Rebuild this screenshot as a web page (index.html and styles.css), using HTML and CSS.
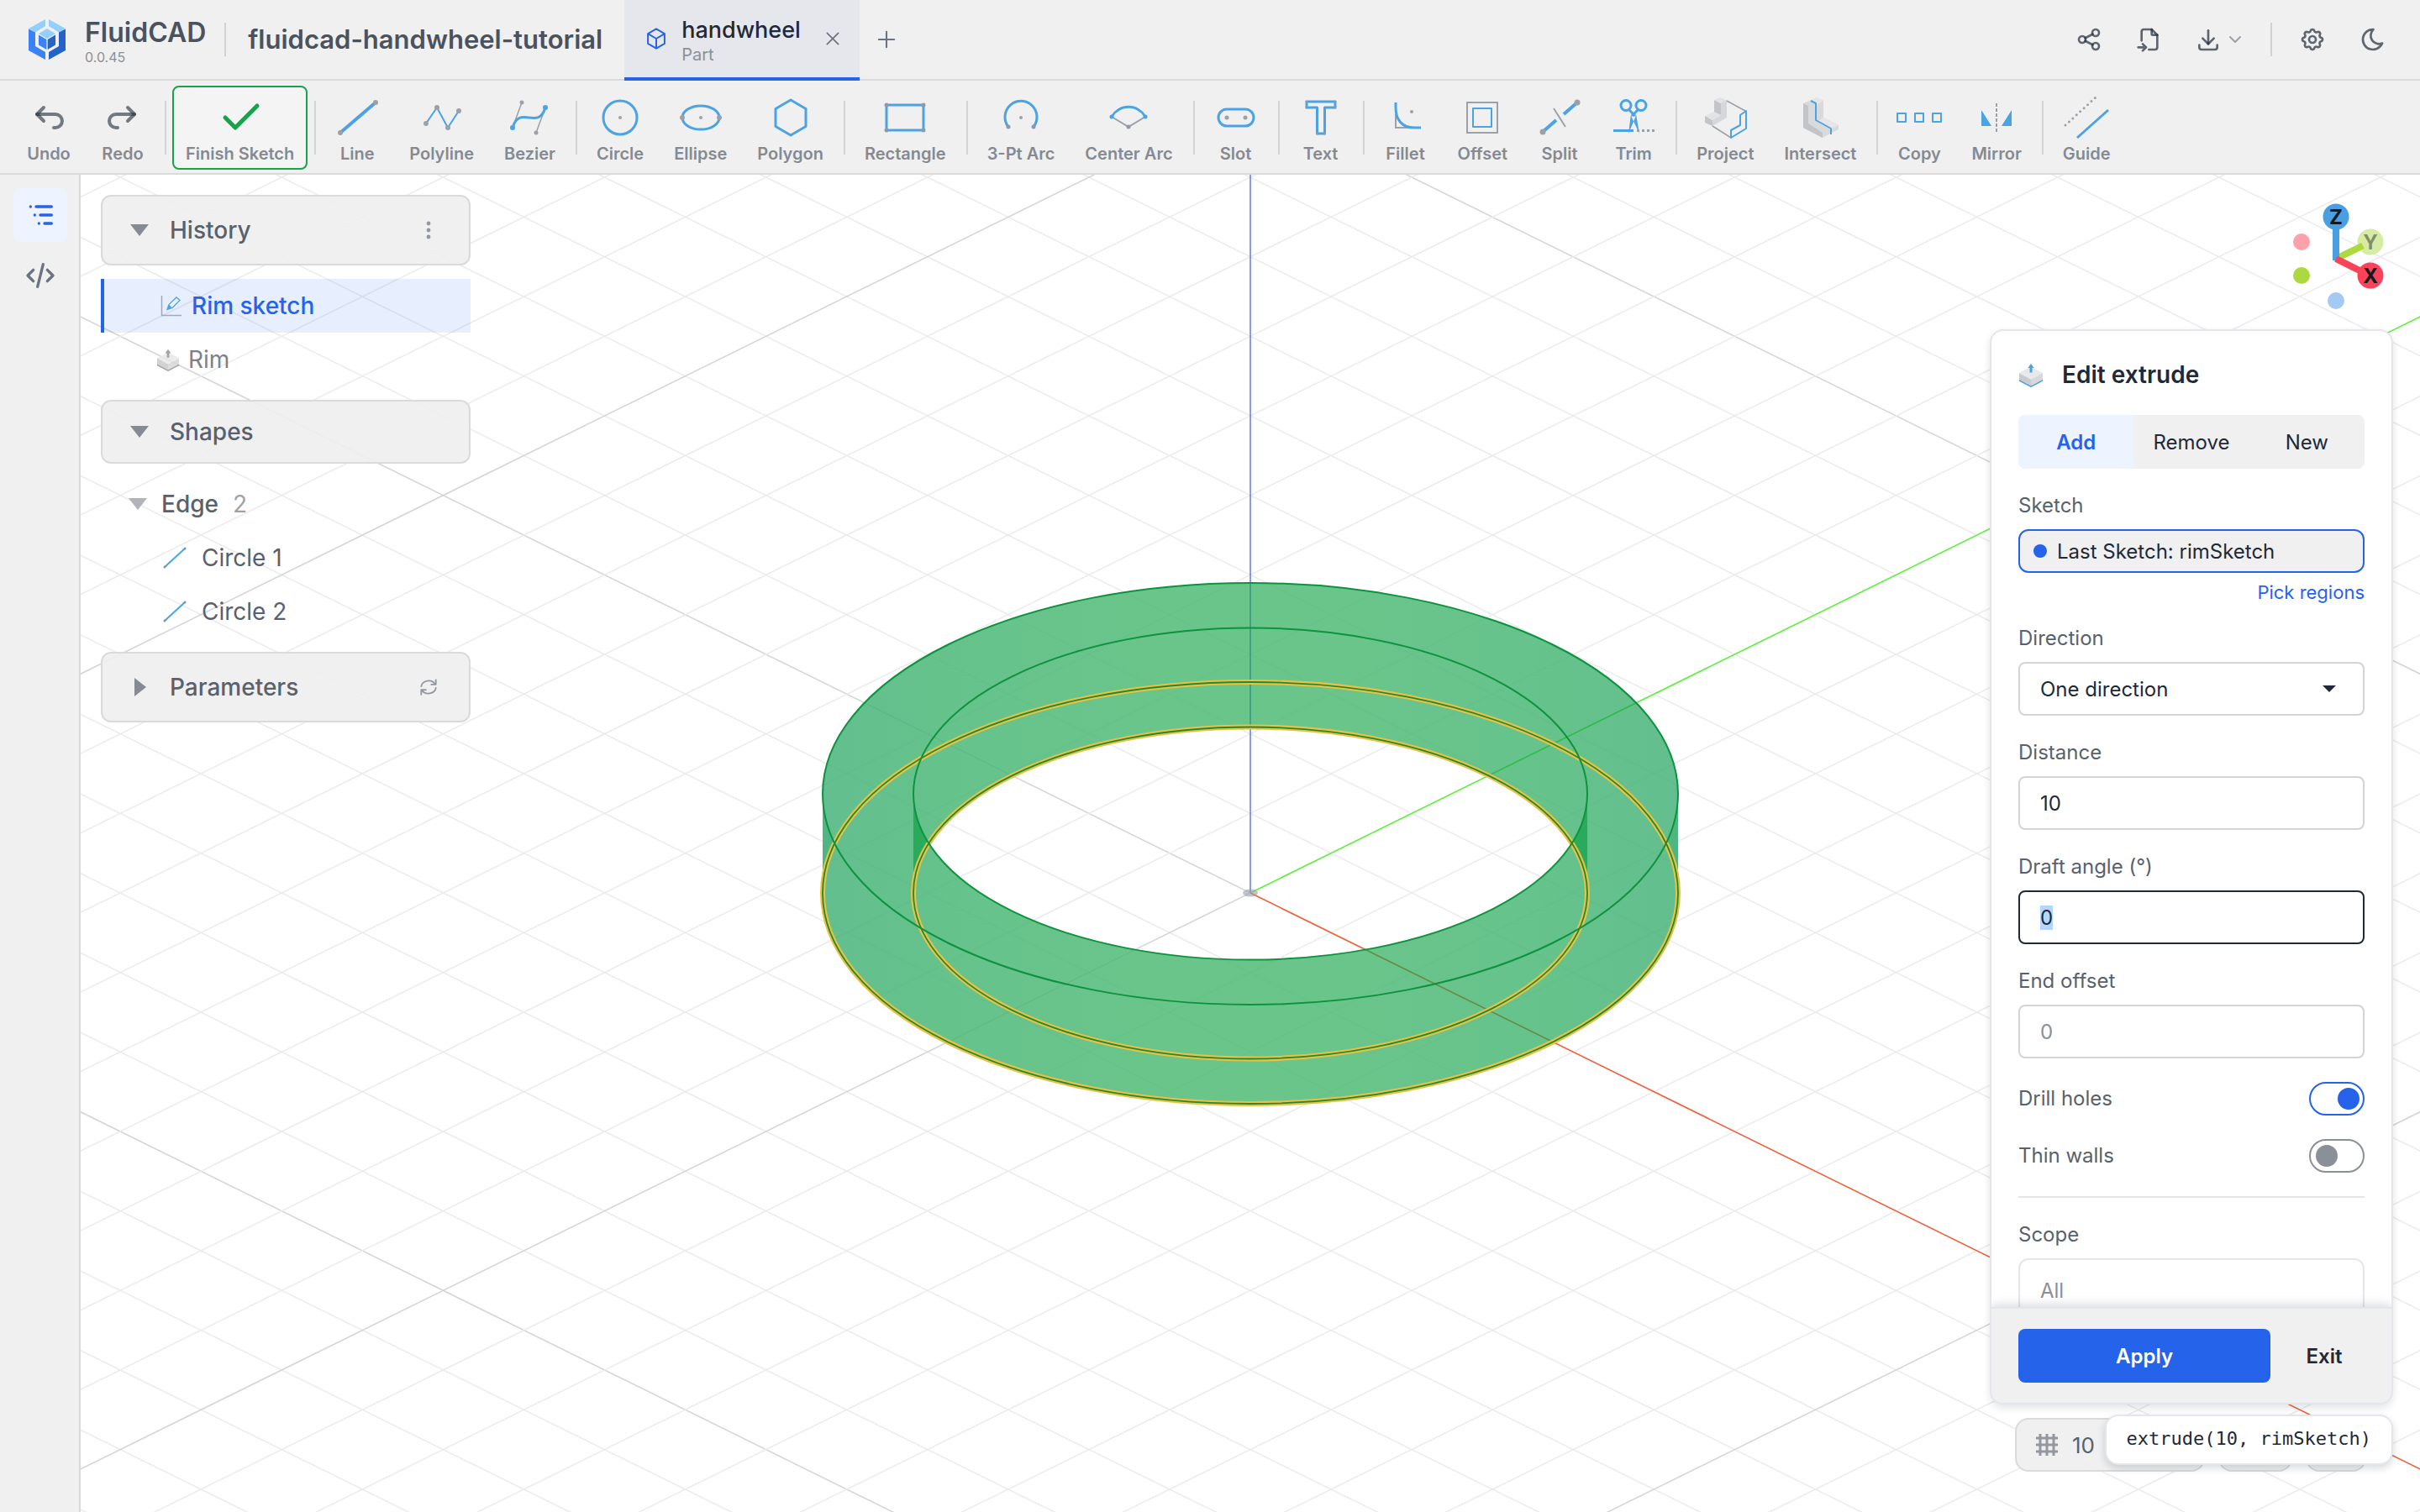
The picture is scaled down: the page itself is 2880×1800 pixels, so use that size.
FILE: index.html
```html
<!DOCTYPE html>
<html lang="en">
<head>
<meta charset="utf-8">
<meta name="viewport" content="width=device-width, initial-scale=1">
<title>FluidCAD – fluidcad-handwheel-tutorial</title>
<link rel="stylesheet" href="styles.css">
<script src="app.js" defer></script>
</head>
<body>
<svg class="defs" width="0" height="0" aria-hidden="true">
  <symbol id="extrude-icon" viewBox="0 0 30 30">
    <path class="ex-base" d="M1 21.500L15 29L29 21.500" />
    <path class="ex-left" d="M1 13L15 20.500V28.500L1 21Z" />
    <path class="ex-right" d="M15 20.500L29 13V21L15 28.500Z" />
    <path class="ex-top" d="M1 13L15 5.500L29 13L15 20.500Z" />
    <path class="ex-arrow" d="M13.500 12.500V7H11.300L15 2L18.700 7H16.500V12.500Z" />
  </symbol>
  <symbol id="edge-icon" viewBox="0 0 28 28">
    <path d="M2 25L26 3" stroke="#4ba3e3" stroke-width="2" />
    <circle cx="2" cy="25" r="1.500" fill="#8a919b" /><circle cx="26" cy="3" r="1.500" fill="#8a919b" />
  </symbol>
</svg>

<header class="topbar">
  <div class="brand">
    <svg class="logo" viewBox="-2 0 48 48" aria-hidden="true">
      <path fill="#93d0ff" d="M0 11L20 0V8L8 15.500ZM44 11L24 0V8L36 15.500ZM12 17L22 11L32 17L22 23Z" />
      <path fill="#3b82f6" d="M0 11.500L8 15.500V32L20 39V48L0 37Z" />
      <path fill="#2563c9" d="M44 11.500L36 15.500V32L24 39V48L44 37Z" />
      <path fill="#3b82f6" d="M12 18.500L21.300 24V36L12 30.500Z" />
      <path fill="#2563c9" d="M32 18.500L22.700 24V36L32 30.500Z" />
    </svg>
    <div class="brand-text">
      <span class="brand-name">FluidCAD</span>
      <span class="brand-version">0.0.45</span>
    </div>
  </div>
  <span class="bar-divider"></span>
  <h1 class="project-name">fluidcad-handwheel-tutorial</h1>
  <div class="tab">
    <svg class="tab-cube" viewBox="0 0 24 24" aria-hidden="true"><path d="M12 2l8.500 5v10L12 22l-8.500-5V7zM3.500 7L12 12l8.500-5M12 12v10" /></svg>
    <div class="tab-text"><span class="tab-name">handwheel</span><span class="tab-kind">Part</span></div>
    <button class="plain tab-close" aria-label="Close tab"><svg viewBox="0 0 24 24"><path d="M2 2L22 22M22 2L2 22" /></svg></button>
  </div>
  <button class="plain tab-add" aria-label="New tab"><svg viewBox="0 0 24 24"><path d="M12 1V23M1 12H23" /></svg></button>

  <div class="top-actions">
    <button class="icon-button" aria-label="Share"><svg viewBox="0 0 24 24"><circle cx="6" cy="12" r="3" /><circle cx="18" cy="6" r="3" /><circle cx="18" cy="18" r="3" /><path d="M8.700 10.700l6.600-3.400M8.700 13.300l6.600 3.400" /></svg></button>
    <button class="icon-button" aria-label="Import file"><svg viewBox="0 0 24 24"><path d="M14 3v4a1 1 0 0 0 1 1h4" /><path d="M5 13v-8a2 2 0 0 1 2-2h7l5 5v11a2 2 0 0 1-2 2h-5.500m-9.500-2h7m-3-3l3 3l-3 3" /></svg></button>
    <button class="icon-button export" aria-label="Export"><svg viewBox="0 0 24 24"><path d="M4 17v2a2 2 0 0 0 2 2h12a2 2 0 0 0 2-2v-2" /><path d="M7 11l5 5l5-5" /><path d="M12 4v12" /></svg><svg class="caret" viewBox="0 0 24 24"><path d="M6 9l6 6l6-6" /></svg></button>
    <span class="bar-divider action-divider"></span>
    <button class="icon-button" aria-label="Settings"><svg viewBox="0 0 24 24"><path d="M10.325 4.317c.426-1.756 2.924-1.756 3.350 0a1.724 1.724 0 0 0 2.573 1.066c1.543-.940 3.310.826 2.370 2.370a1.724 1.724 0 0 0 1.065 2.572c1.756.426 1.756 2.924 0 3.350a1.724 1.724 0 0 0-1.066 2.573c.940 1.543-.826 3.310-2.370 2.370a1.724 1.724 0 0 0-2.572 1.065c-.426 1.756-2.924 1.756-3.350 0a1.724 1.724 0 0 0-2.573-1.066c-1.543.940-3.310-.826-2.370-2.370a1.724 1.724 0 0 0-1.065-2.572c-1.756-.426-1.756-2.924 0-3.350a1.724 1.724 0 0 0 1.066-2.573c-.940-1.543.826-3.310 2.370-2.370c1 .608 2.296.070 2.572-1.065z" /><circle cx="12" cy="12" r="3" /></svg></button>
    <button class="icon-button" aria-label="Dark mode"><svg viewBox="0 0 24 24"><path d="M12 3c.132 0 .263 0 .393 0a7.500 7.500 0 0 0 7.920 12.446a9 9 0 1 1-8.313-12.454z" /></svg></button>
  </div>
</header>

<nav class="toolbar" aria-label="Sketch tools">
  <button class="tool"><svg class="dim" viewBox="0 0 24 24"><path d="M9 14l-4-4l4-4" /><path d="M5 10h11a4 4 0 1 1 0 8h-1" /></svg><span>Undo</span></button>
  <button class="tool"><svg class="dim" viewBox="0 0 24 24"><path d="M15 14l4-4l-4-4" /><path d="M19 10h-11a4 4 0 1 0 0 8h1" /></svg><span>Redo</span></button>
  <span class="tool-divider"></span>
  <button class="tool finish"><svg viewBox="0 0 48 48"><path d="M6 24L18 36L44 10" /></svg><span>Finish Sketch</span></button>
  <span class="tool-divider"></span>
  <button class="tool"><svg viewBox="0 0 48 48"><path class="b w4" d="M4 42L46 6" /><circle class="gd" cx="4" cy="42" r="3" /><circle class="gd" cx="46" cy="6" r="3" /></svg><span>Line</span></button>
  <button class="tool"><svg viewBox="0 0 48 48"><path class="b w2" d="M5 31L18 12L31 36L44 16" /><circle class="gd" cx="5" cy="31" r="3" /><circle class="gd" cx="18" cy="12" r="3" /><circle class="gd" cx="31" cy="36" r="3" /><circle class="gd" cx="44" cy="16" r="3" /></svg><span>Polyline</span></button>
  <button class="tool"><svg viewBox="0 0 48 48"><path class="g w1" d="M4 36L15 6M32 42L43 12" /><path class="b w3" d="M4 36C12 8 35 40 43 12" /><circle class="bd" cx="4" cy="36" r="3" /><circle class="bd" cx="43" cy="12" r="3" /><circle class="gd" cx="15" cy="6" r="2.500" /><circle class="gd" cx="32" cy="42" r="2.500" /></svg><span>Bezier</span></button>
  <span class="tool-divider"></span>
  <button class="tool"><svg viewBox="0 0 48 48"><circle class="b w3" cx="24" cy="24" r="20" /><circle class="gd" cx="24" cy="24" r="2" /></svg><span>Circle</span></button>
  <button class="tool"><svg viewBox="0 0 48 48"><ellipse class="b w3" cx="24" cy="24" rx="22" ry="14" /><circle class="gd" cx="2" cy="24" r="3" /><circle class="gd" cx="24" cy="24" r="2" /><circle class="gd" cx="46" cy="24" r="3" /></svg><span>Ellipse</span></button>
  <button class="tool"><svg viewBox="0 0 48 48"><path class="b w3" d="M24 3L42 13.500V34.500L24 45L6 34.500V13.500Z" /></svg><span>Polygon</span></button>
  <span class="tool-divider"></span>
  <button class="tool"><svg viewBox="0 0 48 48"><path class="b w3" d="M2 9H46V39H2Z" /><path class="gp" d="M2 9h.010M46 9h.010M2 39h.010M46 39h.010" /></svg><span>Rectangle</span></button>
  <span class="tool-divider"></span>
  <button class="tool"><svg viewBox="0 0 48 48"><path class="b w3" d="M9 35A19 19 0 1 1 39 35" /><path class="gp" d="M9 35h.010M39 35h.010" /><circle class="gd" cx="24" cy="24" r="2" /></svg><span>3-Pt Arc</span></button>
  <button class="tool"><svg viewBox="0 0 48 48"><path class="g w2" d="M4 23L24 35L44 23" /><path class="b w3" d="M4 23A23 23 0 0 1 44 23" /><path class="gp" d="M24 35h.010" /><circle class="bd" cx="4" cy="23" r="2.500" /><circle class="bd" cx="44" cy="23" r="2.500" /></svg><span>Center Arc</span></button>
  <span class="tool-divider"></span>
  <button class="tool"><svg viewBox="0 0 48 48"><rect class="b w3" x="3" y="14" width="42" height="20" rx="10" /><circle class="gd" cx="13" cy="24" r="2.500" /><circle class="gd" cx="35" cy="24" r="2.500" /></svg><span>Slot</span></button>
  <span class="tool-divider"></span>
  <button class="tool"><svg viewBox="0 0 48 48"><path class="b w3" d="M7 5H41V12H28.500V43H19.500V12H7Z" /><path class="gp small" d="M7 5h.010M41 5h.010M7 12h.010M41 12h.010M19.500 43h.010M28.500 43h.010" /></svg><span>Text</span></button>
  <span class="tool-divider"></span>
  <button class="tool"><svg viewBox="0 0 48 48"><path class="g w2" d="M12 20V36H28" /><path class="b w3" d="M12 6V12C12 27 20 36 34 36H42" /><circle class="gd" cx="31" cy="17" r="2" /></svg><span>Fillet</span></button>
  <button class="tool"><svg viewBox="0 0 48 48"><rect class="g w2" x="6" y="6" width="36" height="36" /><rect class="b w2" x="13" y="13" width="22" height="22" /></svg><span>Offset</span></button>
  <button class="tool"><svg viewBox="0 0 48 48"><path class="b w4" d="M4 41L20 27M29 20L45 6" /><path class="g w2" d="M17 13L31 35" /><circle class="gd" cx="4" cy="41" r="3.500" /><circle class="gd" cx="45" cy="6" r="3.500" /></svg><span>Split</span></button>
  <button class="tool"><svg viewBox="0 0 48 48"><circle class="b w3" cx="15" cy="9.500" r="6" /><circle class="b w3" cx="33" cy="9.500" r="6" /><path class="b w3" d="M19 15L26 22M29 15L22 22" /><path class="bf" d="M21 20L27 20L31 43L22 24ZM27 20L21 20L18 43L26 24Z" /><path class="b w3" d="M0 39.500H24" /><path class="g w3 dash" d="M28 39.500H49" /></svg><span>Trim</span></button>
  <span class="tool-divider"></span>
  <button class="tool"><svg viewBox="0 0 48 48"><path fill="#d6d7da" d="M19 6L26 3V24L9 34V27L19 21Z" /><path fill="#c3c4c8" d="M11 3L19 7V21L11 18ZM0 22L9 27V34L0 30Z" /><path fill="#e2e3e5" d="M11 3L18 0L26 3L19 7ZM0 22L11 17L19 21L9 27Z" /><path class="g w1" d="M26 4L48 16M9 34L31 48" /><path class="b w2" d="M49 16V37L31 48V39L42 33V21Z" /></svg><span>Project</span></button>
  <button class="tool"><svg viewBox="0 0 48 48"><path fill="#d9dadc" d="M4 7L20 0L28 4V24L46 33V38L27 48L4 36Z" /><path fill="#c3c4c8" d="M4 7L10 10V31L27 42V48L4 36Z" /><path fill="#e6e6e8" d="M20 0L28 4L20 8L13 4ZM28 24L46 33L36 38L20 29Z" /><path class="b w2" d="M13 4L19 7V27L37 37V44" /></svg><span>Intersect</span></button>
  <span class="tool-divider"></span>
  <button class="tool"><svg viewBox="0 0 48 48"><path class="b w2" d="M-2 19H8V29H-2ZM19 19H29V29H19ZM40 19H50V29H40Z" /></svg><span>Copy</span></button>
  <button class="tool"><svg viewBox="0 0 48 48"><path class="bf" d="M6 15V34H18ZM42 15V34H30Z" /><path class="g w2 dash2" d="M24 7V42" /></svg><span>Mirror</span></button>
  <span class="tool-divider"></span>
  <button class="tool"><svg viewBox="0 0 48 48"><path class="g w3 dots" d="M-1 33L36 -1" /><path class="b w3" d="M13 48L50 15" /></svg><span>Guide</span></button>
</nav>

<main class="workspace">
  <aside class="rail">
    <button class="rail-button active" aria-label="Model tree"><svg viewBox="0 0 24 24"><path d="M9 6h11M12 12h8M15 18h5M5 6v.010M8 12v.010M11 18v.010" /></svg></button>
    <button class="rail-button" aria-label="Code"><svg viewBox="0 0 24 24"><path d="M7 8l-4 4l4 4M17 8l4 4l-4 4M14 4l-4 16" /></svg></button>
  </aside>

  <section class="viewport" aria-label="3D view">
    <svg class="scene" viewBox="-1392 -855 2784 1592" preserveAspectRatio="xMidYMid slice" aria-hidden="true">
      <defs>
        <path id="gl" d="M-2000 -985.400L2000 985.400" />
        <path id="ring" fill-rule="evenodd" d="M-509 0V-118A509 251 0 0 1 509 -118V0A509 251 0 0 1 -509 0ZM-383 -59A401 197.500 0 0 1 383 -59A401 197.500 0 0 1 -383 -59Z" />
        <g id="minor">
          <use href="#gl" y="94.660" /><use href="#gl" y="189.320" /><use href="#gl" y="283.980" />
          <use href="#gl" y="378.640" /><use href="#gl" y="473.300" /><use href="#gl" y="567.960" />
          <use href="#gl" y="662.620" /><use href="#gl" y="757.280" /><use href="#gl" y="851.940" />
        </g>
        <g id="family">
          <g stroke="#ececee">
            <use href="#minor" y="-1893.200" /><use href="#minor" y="-946.600" /><use href="#minor" /><use href="#minor" y="946.600" />
          </g>
          <g stroke="#d6d6d9">
            <use href="#gl" y="-946.600" /><use href="#gl" /><use href="#gl" y="946.600" />
          </g>
        </g>
        <linearGradient id="body" gradientUnits="userSpaceOnUse" x1="-509" x2="509" y1="0" y2="0">
          <stop offset="0" stop-color="#0f9c53" /><stop offset=".15" stop-color="#13a24d" />
          <stop offset=".4" stop-color="#1aa64c" /><stop offset=".6" stop-color="#1aa64c" />
          <stop offset=".85" stop-color="#13a24d" /><stop offset="1" stop-color="#0f9c53" />
        </linearGradient>
      </defs>
      <g fill="none" stroke-width="1.600">
        <use href="#family" />
        <use href="#family" transform="scale(-1 1)" />
      </g>
      <use href="#ring" fill="#fff" fill-opacity=".5" />
      <g fill="none" stroke-width="1.600">
        <path stroke="#fff" stroke-width="3" d="M0 0L2000 985.400M0 0L2000 -985.400" />
        <path stroke="#6a82f6" d="M0 0V-900" />
        <path stroke="#5cf03c" d="M0 0L2000 -985.400" />
        <path stroke="#f0603c" d="M0 0L2000 985.400" />
      </g>
      <ellipse rx="9" ry="4.500" fill="#9aa0aa" fill-opacity=".6" />
      <use href="#ring" fill="url(#body)" fill-opacity=".65" />
      <path fill="#2aab5c" d="M-401 -118V0A401 197.500 0 0 1 -383 -59A401 197.500 0 0 1 -401 -118ZM401 -118V0A401 197.500 0 0 0 383 -59A401 197.500 0 0 0 401 -118Z" />
      <path fill="#4fb683" d="M-509 -118V0A509 251 0 0 1 -495 -59A509 251 0 0 1 -509 -118ZM509 -118V0A509 251 0 0 0 495 -59A509 251 0 0 0 509 -118Z" />
      <g fill="none">
        <g stroke="#edc044" stroke-width="6"><ellipse rx="509" ry="251" /><ellipse rx="401" ry="197.500" /></g>
        <g stroke="#1f8b31" stroke-width="1.800"><ellipse rx="509" ry="251" /><ellipse rx="401" ry="197.500" /></g>
        <g stroke="#0c933f" stroke-width="2"><ellipse cy="-118" rx="509" ry="251" /><ellipse cy="-118" rx="401" ry="197.500" /></g>
      </g>
    </svg>

    <div class="tree">
      <div class="tree-head">
        <svg class="twist" viewBox="0 0 22 22"><path d="M0 4H22L11 18Z" /></svg>
        <h2>History</h2>
        <button class="plain head-action" aria-label="History menu"><svg class="kebab" viewBox="0 0 24 24"><circle cx="12" cy="4" r="2.400" /><circle cx="12" cy="12" r="2.400" /><circle cx="12" cy="20" r="2.400" /></svg></button>
      </div>
      <ul class="tree-list">
        <li class="row history selected"><svg class="row-icon" viewBox="0 0 28 28"><path d="M2.500 2V25.500H26" fill="none" stroke="#a3a9b6" stroke-width="1.500" /><path d="M9 18.500L11 12.500L20 4L24 7.500L15 16.500Z" fill="#eaf2fd" stroke="#4ba3e3" stroke-width="1.300" /><path d="M9 18.500L11 12.500L15 16.500Z" fill="#4ba3e3" /></svg><span>Rim sketch</span></li>
        <li class="row history faded"><svg class="row-icon muted"><use href="#extrude-icon" /></svg><span>Rim</span></li>
      </ul>
      <div class="tree-head short">
        <svg class="twist" viewBox="0 0 22 22"><path d="M0 4H22L11 18Z" /></svg>
        <h2>Shapes</h2>
      </div>
      <ul class="tree-list">
        <li class="row group"><svg class="twist light" viewBox="0 0 22 22"><path d="M0 4H22L11 18Z" /></svg><span>Edge</span><span class="count">2</span></li>
        <li class="row shape"><svg class="row-icon"><use href="#edge-icon" /></svg><span>Circle 1</span></li>
        <li class="row shape"><svg class="row-icon"><use href="#edge-icon" /></svg><span>Circle 2</span></li>
      </ul>
      <div class="tree-head">
        <svg class="twist" viewBox="0 0 22 22"><path d="M5 0L19 11L5 22Z" /></svg>
        <h2>Parameters</h2>
        <button class="plain head-action" aria-label="Refresh parameters"><svg class="refresh" viewBox="0 0 24 24"><path d="M2.500 11A9.700 8.500 0 0 1 20.500 8M21.500 2.500V8.500H15.500M21.500 13A9.700 8.500 0 0 1 3.500 16M2.500 21.500V15.500H8.500" /></svg></button>
      </div>
    </div>

    <svg class="gizmo" viewBox="0 0 120 136" aria-label="View orientation">
      <circle cx="41" cy="48" r="10" fill="#fca0aa" /><circle cx="41" cy="88" r="10" fill="#acd93f" /><circle cx="82" cy="118" r="10" fill="#a4c9f2" />
      <circle cx="123" cy="48" r="15.500" fill="#d7eba4" />
      <path d="M82 68L114 52.500" stroke="#acd93f" stroke-width="8" />
      <path d="M82 70V20" stroke="#4a9fe3" stroke-width="8" />
      <path d="M82 68L118 86" stroke="#fa4258" stroke-width="8" />
      <circle cx="82" cy="18" r="15.500" fill="#4a9fe3" /><circle cx="123" cy="88" r="15.500" fill="#fa4258" />
      <text x="82" y="27">Z</text><text x="123" y="57" fill-opacity=".45">Y</text><text x="123" y="97">X</text>
    </svg>

    <div class="status">
      <button class="status-item grid-size"><svg viewBox="0 0 28 28"><path d="M6 1V27M14 1V27M22 1V27M1 6H27M1 14H27M1 22H27" /></svg>10</button>
      <button class="status-item mid" aria-label="View mode"></button>
      <button class="status-item end" aria-label="Fit view"></button>
    </div>

    <form class="panel" onsubmit="return false">
      <div class="panel-body">
        <div class="panel-title"><svg class="title-icon"><use href="#extrude-icon" /></svg><h2>Edit extrude</h2></div>
        <div class="segments">
          <button type="button" class="on">Add</button><button type="button">Remove</button><button type="button">New</button>
        </div>
        <div class="field">
          <span class="label">Sketch</span>
          <button type="button" class="picker"><span class="dot"></span>Last Sketch: rimSketch</button>
          <a class="pick" href="#regions">Pick regions</a>
        </div>
        <div class="field">
          <label for="direction">Direction</label>
          <div class="select-wrap">
            <select id="direction"><option>One direction</option></select>
            <svg viewBox="0 0 16 8"><path d="M0 0H16L8 8Z" /></svg>
          </div>
        </div>
        <div class="field"><label for="distance">Distance</label><input id="distance" type="text" value="10"></div>
        <div class="field"><label for="draft">Draft angle (°)</label><input id="draft" type="text" value="0" autofocus></div>
        <div class="field"><label for="offset">End offset</label><input id="offset" type="text" placeholder="0"></div>
        <div class="switch-row"><label for="drill">Drill holes</label><input id="drill" class="switch" type="checkbox" checked></div>
        <div class="switch-row"><label for="thin">Thin walls</label><input id="thin" class="switch" type="checkbox"></div>
        <hr>
        <div class="field"><label for="scope">Scope</label><input id="scope" class="scope" type="text" placeholder="All"></div>
      </div>
      <footer class="panel-foot">
        <button type="submit" class="apply">Apply</button>
        <button type="button" class="exit">Exit</button>
      </footer>
    </form>
    <code class="preview">extrude(10, rimSketch)</code>
  </section>
</main>
</body>
</html>
```
FILE: styles.css
```css
* { box-sizing: border-box; }

:root {
  --chrome: #f0f0f0;
  --line: #dadadb;
  --blue: #2563eb;
  --ink: #1f2937;
  --ink-2: #59616d;
  --ink-3: #8b9098;
  --tool: #4ba3e3;
}

body {
  margin: 0;
  height: 100vh;
  display: flex;
  flex-direction: column;
  overflow: hidden;
  background: #fff;
  color: var(--ink);
  font-family: Inter, "Liberation Sans", sans-serif;
  font-size: 28px;
}

button, input, select { font: inherit; color: inherit; }
button { cursor: pointer; }
h1, h2, ul { margin: 0; padding: 0; }
svg { display: block; flex: none; overflow: visible; }
.defs { position: absolute; }
.plain { border: 0; padding: 0; background: none; display: grid; place-items: center; }

/* Top bar */
.topbar {
  flex: none;
  display: flex;
  align-items: center;
  height: 96px;
  padding-left: 32px;
  padding-right: 24px;
  background: var(--chrome);
  border-bottom: 2px solid var(--line);
}
.brand { display: flex; align-items: center; gap: 21px; }
.logo { width: 48px; height: 48px; }
.brand-text { display: flex; flex-direction: column; padding-top: 4px; }
.brand-name { font-size: 32px; line-height: 38px; font-weight: 600; color: #4a5260; }
.brand-version { font-size: 16px; line-height: 20px; color: var(--ink-3); }
.bar-divider { width: 2px; height: 40px; background: #d0d1d4; }
.brand + .bar-divider { margin: 0 26px 0 22px; }
.project-name { font-size: 31px; line-height: 40px; font-weight: 600; color: #4a5260; }
.tab {
  display: flex;
  align-items: center;
  align-self: stretch;
  margin: 0 22px 0 26px;
  margin-bottom: -2px;
  padding: 0 24px;
  background: #e5e7ec;
  border-bottom: 4px solid var(--blue);
}
.tab-cube { width: 28px; height: 28px; fill: none; stroke: var(--blue); stroke-width: 1.700; stroke-linejoin: round; }
.tab-text { display: flex; flex-direction: column; margin: 0 30px 0 16px; padding-top: 4px; }
.tab-name { font-size: 27px; line-height: 34px; font-weight: 500; }
.tab-kind { font-size: 20px; line-height: 24px; color: var(--ink-3); }
.tab-close svg { width: 16px; height: 16px; }
.tab-add svg { width: 20px; height: 20px; }
.tab-close svg, .tab-add svg { fill: none; stroke: #6b7280; stroke-width: 2.500; stroke-linecap: round; }

.top-actions { display: flex; align-items: center; gap: 8px; margin-left: auto; }
.icon-button {
  display: flex; align-items: center; justify-content: center; gap: 4px;
  width: 64px; height: 64px; padding: 0; border: 0; border-radius: 8px; background: none;
}
.icon-button svg {
  width: 32px; height: 32px; fill: none;
  stroke: rgba(31, 41, 55, .7); stroke-width: 2; stroke-linecap: round; stroke-linejoin: round;
}
.icon-button.export { width: 88px; }
.icon-button .caret { width: 24px; height: 24px; stroke: #9ca0a8; }
.action-divider { margin: 0 8px; }

/* Tool bar */
.toolbar {
  flex: none;
  display: flex;
  align-items: flex-start;
  gap: 4px;
  height: 112px;
  padding: 6px 16px 4px;
  background: var(--chrome);
  border-bottom: 2px solid var(--line);
}
.tool {
  display: flex; flex-direction: column; align-items: center; gap: 8px;
  min-width: 84px; height: 100px; padding: 12px 14px 0;
  border: 2px solid transparent; border-radius: 8px; background: none;
  color: #858a92; font-size: 20px; line-height: 22px; font-weight: 600; white-space: nowrap;
}
.tool svg { width: 48px; height: 48px; fill: none; }
.tool-divider { flex: none; width: 2px; height: 64px; margin: 18px 3px 18px 4px; background: #d3d4d7; }
.tool .dim { stroke: rgba(31, 41, 55, .6); stroke-width: 2; stroke-linecap: round; stroke-linejoin: round; }
.finish { border-color: #16a34a; background: #f3f4f3; }
.finish svg { stroke: #16a34a; stroke-width: 5; stroke-linecap: round; stroke-linejoin: round; }
.b { stroke: var(--tool); stroke-linejoin: round; }
.g { stroke: #9ca0a8; }
.bf, .bd { fill: var(--tool); }
.gd { fill: #9ca0a8; }
.gp { stroke: #8f99a8; stroke-width: 5; stroke-linecap: round; }
.gp.small { stroke-width: 3; }
.w1 { stroke-width: 1.500px; }
.w2 { stroke-width: 2px; }
.w3 { stroke-width: 3px; }
.w4 { stroke-width: 4px; }
.dash { stroke-dasharray: 3 3; }
.dash2 { stroke-dasharray: 4 2; }
.dots { stroke-dasharray: 0 6; stroke-linecap: round; }

/* Workspace */
.workspace { flex: 1; min-height: 0; display: flex; }
.rail {
  flex: none; width: 96px; padding: 16px 0 16px 16px;
  display: flex; flex-direction: column; align-items: flex-start; gap: 8px;
  background: var(--chrome); border-right: 2px solid var(--line);
}
.rail-button {
  width: 64px; height: 64px; padding: 0; border: 0; border-radius: 8px; background: none;
  display: grid; place-items: center;
}
.rail-button svg { width: 40px; height: 40px; fill: none; stroke: #6b7280; stroke-width: 2; stroke-linecap: round; stroke-linejoin: round; }
.rail-button.active { background: #edf3ff; }
.rail-button.active svg { stroke: var(--blue); }

.viewport { flex: 1; min-width: 0; position: relative; overflow: hidden; }
.scene { position: absolute; inset: 0; width: 100%; height: 100%; }

/* Model tree floats over the scene */
.tree { position: absolute; top: 24px; left: 24px; width: 440px; display: flex; flex-direction: column; gap: 16px; }
.tree-head {
  display: flex; align-items: center; height: 84px; padding: 0 32px 0 33px;
  background: rgba(238, 238, 238, .9); border: 2px solid var(--line); border-radius: 12px;
}
.tree-head.short { height: 76px; }
.tree-head h2 { font-size: 28px; line-height: 36px; font-weight: 500; color: var(--ink-2); margin-left: 25px; }
.twist { width: 22px; height: 22px; fill: #858a93; }
.twist.light { fill: #b0b3b9; }
.head-action { width: 32px; height: 32px; margin-left: auto; }
.kebab { width: 24px; height: 24px; fill: #9398a0; }
.refresh { width: 22px; height: 22px; fill: none; stroke: #9398a0; stroke-width: 2; stroke-linecap: round; stroke-linejoin: round; }
.tree-list { list-style: none; }
.row { display: flex; align-items: center; height: 64px; color: var(--ink-2); line-height: 36px; border-left: 4px solid transparent; }
.row-icon { width: 28px; height: 28px; }
.history { gap: 10px; padding-left: 62px; }
.history.selected { background: rgba(37, 99, 235, .11); border-color: var(--blue); color: var(--blue); padding-left: 66px; font-weight: 500; }
.history.faded { color: #7b828c; }
.shape { gap: 18px; padding-left: 70px; }
.group { padding-left: 29px; gap: 17px; font-weight: 500; }
.count { font-weight: 400; color: #9ea2a9; }
.ex-base { fill: none; stroke: #4ba3e3; stroke-width: 2; }
.ex-left { fill: #c9cbcf; }
.ex-right { fill: #d6d8db; }
.ex-top { fill: #e8e8ea; }
.ex-arrow { fill: #4ba3e3; }
.muted { filter: grayscale(1); opacity: .85; }

.gizmo { position: absolute; top: 32px; right: 62px; width: 120px; height: 136px; }
.gizmo text { font-size: 24px; font-weight: 700; text-anchor: middle; fill: #14181f; }

/* Status items */
.status { position: absolute; right: 64px; bottom: 48px; display: flex; gap: 16px; }
.status-item {
  display: flex; align-items: center; gap: 16px; height: 64px; padding: 0 22px;
  background: rgba(238, 238, 238, .9); border: 2px solid var(--line); border-radius: 16px;
  color: var(--ink-2); font-size: 26px;
}
.status-item svg { width: 28px; height: 28px; fill: none; stroke: #9398a0; stroke-width: 3; }
.grid-size { width: 226px; }
.mid { width: 88px; }
.end { width: 72px; }

/* Feature panel */
.panel {
  position: absolute; top: 184px; right: 32px; bottom: 128px; width: 480px;
  display: flex; flex-direction: column; overflow: hidden;
  background: #fff; border: 2px solid #e3e6eb; border-radius: 16px;
  box-shadow: 0 4px 10px rgba(15, 23, 42, .12);
  font-size: 24px;
}
.panel-body { flex: 1; min-height: 0; overflow: hidden; padding: 32px 32px 0; display: flex; flex-direction: column; gap: 28px; }
.panel-body > * { flex: none; }
.panel-title { display: flex; align-items: center; gap: 22px; height: 40px; }
.panel-title h2 { font-size: 28px; line-height: 40px; font-weight: 600; }
.title-icon { width: 30px; height: 30px; }
.segments { display: flex; height: 64px; border-radius: 8px; overflow: hidden; background: var(--chrome); }
.segments button { flex: 1 1 0; padding: 0; border: 0; background: none; }
.segments .on { background: #edf3ff; color: var(--blue); font-weight: 600; }
.field { display: flex; flex-direction: column; gap: 12px; }
.field label, .label, .switch-row label { line-height: 32px; color: var(--ink-2); }
.field input, select {
  width: 100%; height: 64px; padding: 0 24px; border: 2px solid #d3d4d6; border-radius: 8px;
  background: #fff; outline: 0;
}
.field input:focus { border-color: var(--ink); }
input::placeholder { color: var(--ink-3); opacity: 1; }
input::selection { background: #b3d7ff; color: var(--ink); }
.picker {
  display: flex; align-items: center; gap: 12px; height: 52px; padding: 0 16px; text-align: left;
  background: var(--chrome); border: 2px solid var(--blue); border-radius: 12px;
}
.dot { width: 16px; height: 16px; border-radius: 50%; background: var(--blue); }
.pick { align-self: flex-end; font-size: 22px; line-height: 22px; color: var(--blue); text-decoration: none; }
.select-wrap { display: grid; align-items: center; }
.select-wrap > * { grid-area: 1 / 1; }
select { appearance: none; }
.select-wrap svg { width: 16px; height: 8px; margin-right: 34px; justify-self: end; fill: var(--ink); pointer-events: none; }
.switch-row { display: flex; align-items: center; justify-content: space-between; height: 40px; }
.switch {
  appearance: none; display: flex; align-items: center; width: 66px; height: 40px; margin: 0; padding: 0 6px;
  border: 2px solid currentColor; border-radius: 20px; color: var(--ink-3);
}
.switch::before { content: ""; width: 26px; height: 26px; border-radius: 50%; background: currentColor; }
.switch:checked { color: var(--blue); justify-content: flex-end; padding: 0 4px; }
hr { width: 100%; height: 2px; margin: 0; border: 0; background: #e5e5e6; }
.field .scope { height: 76px; border-color: #e3e6eb; border-radius: 12px; }
.panel-foot {
  flex: none; position: relative; display: flex; gap: 16px; padding: 24px 32px;
  background: var(--chrome); border-top: 2px solid #e3e6eb;
  box-shadow: 0 -2px 12px rgba(15, 23, 42, .18);
}
.apply, .exit { height: 64px; padding: 0; border: 0; border-radius: 8px; font-weight: 600; }
.apply { flex: 1; background: var(--blue); color: #fff; }
.exit { width: 96px; background: none; }

.preview {
  position: absolute; right: 32px; bottom: 56px; padding: 13px 24px 15px;
  background: #fff; border: 2px solid #e3e6eb; border-radius: 16px;
  box-shadow: 0 4px 10px rgba(15, 23, 42, .16);
  font-family: "DejaVu Sans Mono", "Liberation Mono", monospace; font-size: 22px; line-height: 28px;
}
```
FILE: app.js
```js
// Start with the draft angle ready to be overwritten.
const draft = document.getElementById('draft');
draft.focus({ preventScroll: true });
draft.select();
```
